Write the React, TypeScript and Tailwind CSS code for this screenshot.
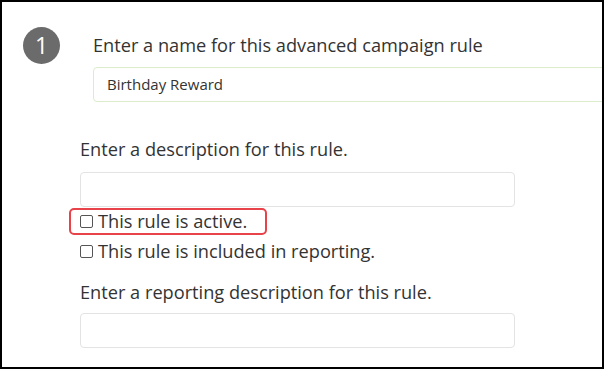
import React from 'react';

const font = { fontFamily: '"Open Sans", "Liberation Sans", sans-serif' };

const Check = ({ label }: { label: string }) => (
  <label className="flex items-center h-[27px] text-[18.2px] text-[#333] leading-none">
    <span className="w-[13px] h-[13px] border border-[#555] rounded-[2px] bg-white mr-[5px] shrink-0" />
    <span>{label}</span>
  </label>
);

const App = () => {
  return (
    <div
      className="w-[604px] h-[369px] border-2 border-black bg-white overflow-hidden text-[#333]"
      style={font}
    >
      {/* step 1 */}
      <div className="flex pt-[25px] pl-[21px]">
        <div className="w-[37px] h-[37px] rounded-full bg-[#6b6b6b] text-white text-[23px] flex items-center justify-center shrink-0">
          1
        </div>
        <div className="ml-[33px] flex-1 min-w-[560px]">
          <div className="h-[37px] flex items-center text-[18.2px]">
            Enter a name for this advanced campaign rule
          </div>
          <div className="mt-[3px] h-[35px] border border-[#dbeccd] rounded-[4px] flex items-center pl-[13px] text-[15px] text-[#333]">
            Birthday Reward
          </div>
        </div>
      </div>

      <div className="pl-[78px] pr-[87px] mt-[36px]">
        <div className="text-[18.2px] h-[24px] flex items-center">Enter a description for this rule.</div>
        <div className="mt-[10px] h-[35px] border border-[#e3e3e3] rounded-[4px] bg-white" />

        <div className="-ml-[11px] mt-[1px] w-[198px] h-[27px] border-2 border-[#e8434a] rounded-[5px] pl-[9px] flex items-center">
          <Check label="This rule is active." />
        </div>
        <div className="mt-[3px]">
          <Check label="This rule is included in reporting." />
        </div>

        <div className="mt-[16px] text-[18.2px] h-[24px] flex items-center">
          Enter a reporting description for this rule.
        </div>
        <div className="mt-[8px] h-[35px] border border-[#e3e3e3] rounded-[4px] bg-white" />
      </div>
    </div>
  );
};

export default App;
